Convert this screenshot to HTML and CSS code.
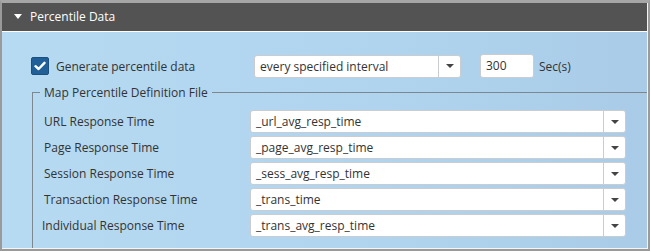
FILE: index.html
```html
<!DOCTYPE html>
<html lang="en">
<head>
  <meta charset="UTF-8" />
  <title>Percentile Data</title>
  <link rel="stylesheet" href="styles.css">
</head>
<body>

<div class="panel">
  <div class="panel-inner">
    <div class="panel-header">
      <span class="caret"></span>
      <span class="panel-title">Percentile Data</span>
    </div>

    <div class="panel-body">
      <div class="top-row">
        <span class="checkbox">
          <svg width="12" height="10" viewBox="0 0 12 10"><path d="M1.5 5.2 L4.6 8 L10.5 1.8" fill="none" stroke="#fff" stroke-width="2.4" stroke-linecap="round" stroke-linejoin="round"/></svg>
        </span>
        <span class="check-label">Generate percentile data</span>
        <div class="combo interval">
          <span class="combo-text">every specified interval</span>
          <span class="combo-btn"><span class="arrow"></span></span>
        </div>
        <div class="num-input">300</div>
        <span class="unit">Sec(s)</span>
      </div>

      <fieldset class="map-set">
        <legend>Map Percentile Definition File</legend>
        <div class="map-grid">
          <label>URL Response Time</label>
          <div class="combo"><span class="combo-text">_url_avg_resp_time</span><span class="combo-btn"><span class="arrow"></span></span></div>

          <label>Page Response Time</label>
          <div class="combo"><span class="combo-text">_page_avg_resp_time</span><span class="combo-btn"><span class="arrow"></span></span></div>

          <label>Session Response Time</label>
          <div class="combo"><span class="combo-text">_sess_avg_resp_time</span><span class="combo-btn"><span class="arrow"></span></span></div>

          <label>Transaction Response Time</label>
          <div class="combo"><span class="combo-text">_trans_time</span><span class="combo-btn"><span class="arrow"></span></span></div>

          <label class="shift">Individual Response Time</label>
          <div class="combo"><span class="combo-text">_trans_avg_resp_time</span><span class="combo-btn"><span class="arrow"></span></span></div>
        </div>
      </fieldset>
    </div>
  </div>
</div>

</body>
</html>
```

FILE: styles.css
```css
body {
  margin: 0;
  font-family: "Open Sans", Arial, sans-serif;
  font-size: 12px;
  color: #333;
  background: #fff;
}
.panel {
  width: 650px;
  height: 251px;
  box-sizing: border-box;
  border: 2px solid #9a9a9a;
  border-top: 3px solid #a6a6a6;
  overflow: hidden;
}
.panel-inner {
  height: 100%;
  box-sizing: border-box;
  border-right: 1px solid #f4f4f4;
  border-bottom: 1px solid #f4f4f4;
  display: flex;
  flex-direction: column;
  overflow: hidden;
}
.panel-header {
  flex-shrink: 0;
  height: 28px;
  background: #535353;
  border-bottom: 1px solid #fff;
  display: flex;
  align-items: center;
  color: #fff;
  font-size: 12px;
  padding-left: 12px;
}
.caret {
  width: 0;
  height: 0;
  border-left: 4px solid transparent;
  border-right: 4px solid transparent;
  border-top: 5px solid #fff;
  margin-right: 8px;
  margin-top: -1px;
}
.panel-title {
  margin-top: -1px;
}
.panel-body {
  flex: 1;
  min-height: 0;
  overflow: hidden;
  background: linear-gradient(90deg, #b6daf1 0%, #b0d4ee 60%, #a9cbe7 100%);
  padding: 22px 0 0 29px;
  display: flex;
  flex-direction: column;
}
.top-row {
  flex-shrink: 0;
  display: flex;
  align-items: center;
  height: 24px;
}
.checkbox {
  width: 18px;
  height: 18px;
  box-sizing: border-box;
  background: #215f98;
  border: 1px solid #1b4f80;
  border-radius: 2px;
  display: flex;
  align-items: center;
  justify-content: center;
  margin-right: 7px;
}
.check-label {
  width: 198px;
}
.combo {
  height: 23px;
  box-sizing: border-box;
  background: #fff;
  border: 1px solid #c9cdd1;
  border-radius: 3px;
  display: flex;
  align-items: center;
}
.combo.interval {
  width: 207px;
}
.combo-text {
  flex: 1;
  padding-left: 5px;
  white-space: nowrap;
}
.combo-btn {
  width: 21px;
  height: 100%;
  border-left: 1px solid #c9cdd1;
  display: flex;
  align-items: center;
  justify-content: center;
}
.arrow {
  width: 0;
  height: 0;
  border-left: 4px solid transparent;
  border-right: 4px solid transparent;
  border-top: 4px solid #444;
}
.num-input {
  width: 54px;
  height: 24px;
  box-sizing: border-box;
  background: #fff;
  border: 1px solid #c9cdd1;
  border-radius: 3px;
  margin-left: 19px;
  padding-left: 5px;
  line-height: 22px;
}
.unit {
  margin-left: 5px;
}
.map-set {
  flex-shrink: 0;
  margin: 6px 0 0 1px;
  padding: 4px 21px 20px 7px;
  border: 1px solid #7c8790;
  border-right: 0;
  min-width: 0;
}
.map-set legend {
  padding: 0 4px;
  font-size: 12px;
}
.map-grid {
  display: grid;
  grid-template-columns: 206px 1fr;
  row-gap: 3px;
  align-items: center;
  padding-left: 4px;
  margin-top: 5px;
}
.map-grid label {
  line-height: 23px;
}
.map-grid .shift {
  margin-left: -2px;
}
```
